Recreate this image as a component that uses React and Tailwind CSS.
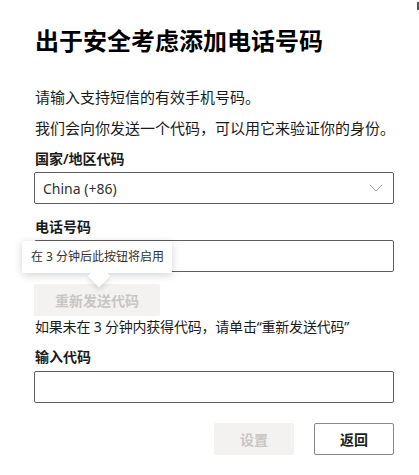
import React from "react";

export default function App() {
  const font = { fontFamily: '"Noto Sans", "Noto Sans CJK SC", sans-serif' };
  return (
    <div className="relative w-[419px] h-[475px] bg-white text-[#1b1b1b] overflow-hidden" style={font}>
      <div className="absolute right-0 top-[2px] w-[2px] h-[8px] bg-[#555]" />
      <div className="flex flex-col pl-[34px] w-[394px]">
        <h1 className="mt-[25px] h-[32px] leading-[32px] text-[24px] font-bold text-black pl-[1px]">出于安全考虑添加电话号码</h1>
        <p className="mt-[30px] h-[20px] leading-[20px] text-[15px] pl-[1px]">请输入支持短信的有效手机号码。</p>
        <p className="mt-[11px] h-[20px] leading-[20px] text-[15px] pl-[1px] whitespace-nowrap">我们会向你发送一个代码，可以用它来验证你的身份。</p>
        <label className="mt-[11px] h-[20px] leading-[20px] text-[14px] font-semibold pl-[1px]">国家/地区代码</label>
        <div className="mt-[3px] h-[32px] border border-[#605e5c] rounded-[2px] flex items-center justify-between pl-[8px] pr-[10px]">
          <span className="text-[14px] text-[#323130]">China (+86)</span>
          <svg width="14" height="8" viewBox="0 0 14 8" fill="none">
            <path d="M1 1l6 6 6-6" stroke="#a19f9d" strokeWidth="1" />
          </svg>
        </div>
        <label className="mt-[13px] h-[20px] leading-[20px] text-[14px] font-semibold pl-[1px]">电话号码</label>
        <div className="relative mt-[3px]">
          <div className="h-[32px] border border-[#605e5c] rounded-[2px]" />
          <div className="absolute left-[-12px] top-[1px] w-[150px] h-[32px] bg-white rounded-[2px] shadow-[0_2px_8px_rgba(0,0,0,0.18)] flex items-center pl-[9px] text-[12px] text-[#323130] whitespace-nowrap">
            在 3 分钟后此按钮将启用
            <div className="absolute left-[69px] top-[27px] w-[16px] h-[16px] bg-white rotate-45 shadow-[3px_3px_5px_rgba(0,0,0,0.10)]" />
          </div>
        </div>
        <button className="mt-[12px] w-[126px] h-[32px] bg-[#f3f2f1] rounded-[2px] text-[14px] font-bold text-[#c8c6c4]">重新发送代码</button>
        <p className="mt-[1px] h-[20px] leading-[20px] text-[14px] pl-[1px] whitespace-nowrap tracking-[-0.2px]">如果未在 3 分钟内获得代码，请单击“重新发送代码”</p>
        <label className="mt-[10px] h-[20px] leading-[20px] text-[14px] font-semibold pl-[1px]">输入代码</label>
        <div className="mt-[4px] h-[32px] border border-[#605e5c] rounded-[2px]" />
        <div className="mt-[20px] flex justify-end gap-[20px]">
          <button className="w-[80px] h-[32px] bg-[#f3f2f1] rounded-[2px] text-[14px] font-bold text-[#c8c6c4]">设置</button>
          <button className="w-[80px] h-[32px] bg-white border border-[#8a8886] rounded-[2px] text-[14px] font-bold text-[#201f1e]">返回</button>
        </div>
      </div>
    </div>
  );
}
